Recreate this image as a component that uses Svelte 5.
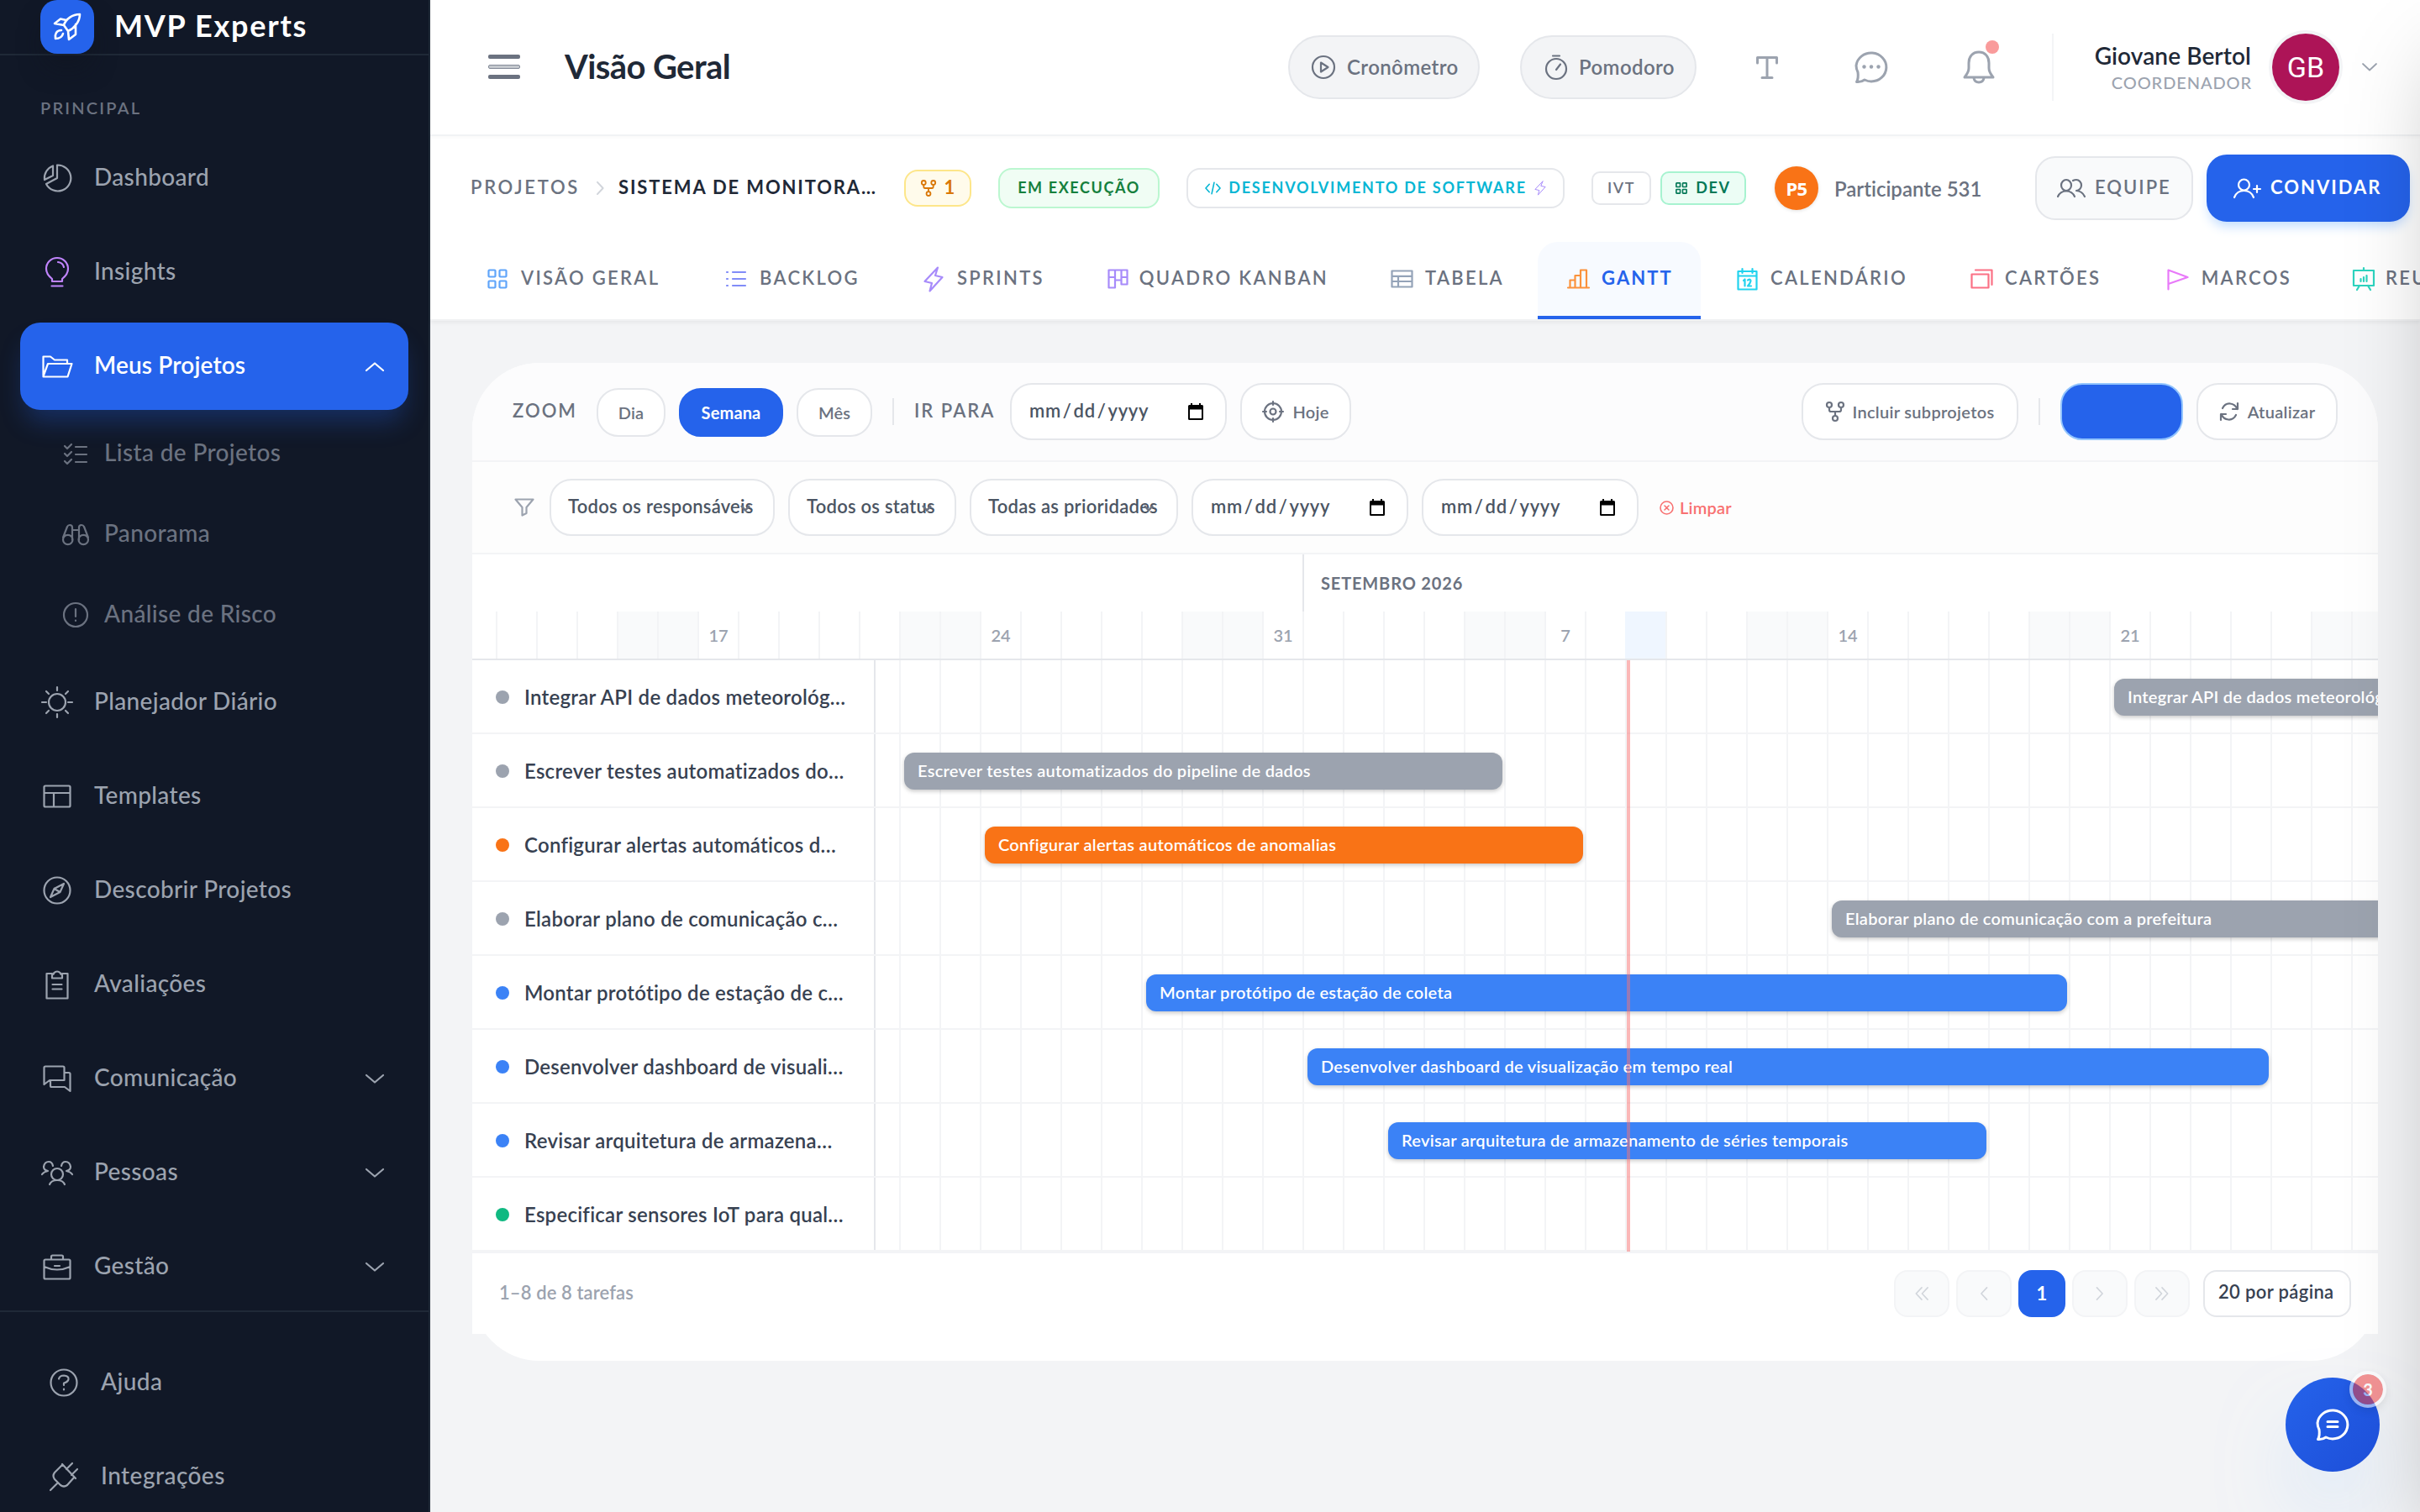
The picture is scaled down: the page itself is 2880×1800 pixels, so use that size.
<script>
  const icons = {
    rocket: [32, 32, 'M12 14C14 7 22 1 31 1C31 10 24 18 17 21ZM15 8L8 6.500L1 12L12 14M26 13V25L18 31L17 21M9 20C3 20 1 25 2 30C7 30 10 28 11 24'],
    pie: [34, 34, 'M17 1.500V17L4 24A15.500 15.500 0 1 0 17 1.500ZM12 2.500V14L2 19A15.500 15.500 0 0 1 12 2.500Z'],
    bulb: [28, 36, 'M8 29H20V26C25 22 27 18 27 14A13 13 0 0 0 1 14C1 18 3 22 8 26ZM7.500 34.500H20.500M15 6A8 8 0 0 1 22 12'],
    folder: [37, 27, 'M1.500 24V1.500H10L15 5.500H30V9.500M1.500 25L7 10H35.500L30.500 25.500H1.500Z'],
    checklist: [28, 25, 'M1 3L4 6L9 1M1 12L4 15L9 10M1 21L4 24L9 19M14 4H27M14 13H27M14 22H27'],
    binoculars: [32, 25, 'M12 19V4Q12 1 9 1Q7 1 6 3L1 16M20 19V4Q20 1 23 1Q25 1 26 3L31 16M12 7H20M12.500 18.500A5.700 5.500 0 1 1 1 18.500A5.700 5.500 0 1 1 12.500 18.500M31 18.500A5.700 5.500 0 1 1 19.500 18.500A5.700 5.500 0 1 1 31 18.500'],
    alert: [30, 30, 'M29 15A14 14 0 1 1 1 15A14 14 0 1 1 29 15M15 8V17M15 21.500V22'],
    sun: [38, 38, 'M29 19A10 10 0 1 1 9 19A10 10 0 1 1 29 19M19 1V5M19 33V37M1 19H6M32 19H37M6 6L9 9M29 29L32 32M6 32L9 29M29 9L32 6'],
    layout: [34, 28, 'M3 1.500H31Q32.500 1.500 32.500 3V25Q32.500 26.500 31 26.500H3Q1.500 26.500 1.500 25V3Q1.500 1.500 3 1.500ZM1.500 10H32.500M13 10V26.500'],
    compass: [34, 34, 'M32.500 17A15.500 15.500 0 1 1 1.500 17A15.500 15.500 0 1 1 32.500 17M25 9L20.500 19L9 25L13.500 15ZM13.500 15L20.500 19'],
    clipboard: [28, 35, 'M8 4H1.500V33.500H26.500V4H20M8 9.500H20V5Q18 5 18 3.500Q16 1.500 14 1.500Q12 1.500 10 3.500Q10 5 8 5ZM8.500 17H19.500M8.500 22.500H19.500'],
    chats: [34, 33, 'M1.500 23V3Q1.500 1.500 3 1.500H24Q25.500 1.500 25.500 3V18H8ZM25.500 9H31Q32.500 9 32.500 10.500V31L26 26H10.500Q9 26 9 24.500V18'],
    people: [38, 29, 'M26 16A7 7 0 1 1 12 16A7 7 0 1 1 26 16M10 28Q12 23 19 23Q26 23 28 28M1 16Q3 13 8 12Q3 11 3 7Q4 1 9 1Q13 1 14 6M37 16Q35 13 30 12Q35 11 35 7Q34 1 29 1Q25 1 24 6'],
    briefcase: [34, 31, 'M3 6.500H31Q32.500 6.500 32.500 8V28Q32.500 29.500 31 29.500H3Q1.500 29.500 1.500 28V8Q1.500 6.500 3 6.500ZM10 6.500V3Q10 1.500 11.500 1.500H22.500Q24 1.500 24 3V6.500M1.500 15Q17 22 32.500 15M14 14H20'],
    help: [34, 34, 'M32.500 17A15.500 15.500 0 1 1 1.500 17A15.500 15.500 0 1 1 32.500 17M11 12.500Q12 8.500 17 8.500Q23 9 22.500 13Q22 16 17 17.500V20M17 24.500V25.500'],
    plug: [34, 34, 'M1 33L9 25M15 2L31 19M27 1L20 8M33 8L26 15M15 3L6 12Q3 16 6 20L13 27Q17 30 21 27L29 18'],
    up: [22, 11, 'M1 10L11 1.500L21 10'],
    down: [22, 11, 'M1 1L11 9.500L21 1'],
    play: [28, 28, 'M27 14A13 13 0 1 1 1 14A13 13 0 1 1 27 14M11 8.500L19.500 14L11 19.500Z'],
    timer: [26, 30, 'M25 17A12 12 0 1 1 1 17A12 12 0 1 1 25 17M9 1.500H17M13 18L18 11.500'],
    text: [26, 27, 'M1.500 8V1.500H24.500V8M13 1.500V25.500M7 25.500H19'],
    chat: [40, 40, 'M4 26Q2 22 2 18A18 17 0 1 1 20 37Q16 37 12 35Q8 38 2.500 37.500Q5 33 4 26Z'],
    bell: [38, 40, 'M19 2C11 2 7 8 7 15V21C7 26 5 28 2 32H36C33 28 31 26 31 21V15C31 8 27 2 19 2ZM13 33Q14 38 19 38Q24 38 25 33'],
    chevron: [18, 10, 'M1 1L9 8.500L17 1'],
    right: [10, 18, 'M1 1L8.500 9L1 17'],
    left: [10, 18, 'M9 1L1.500 9L9 17'],
    first: [18, 18, 'M9 1L1.500 9L9 17M17 1L9.500 9L17 17'],
    last: [18, 18, 'M1 1L8.500 9L1 17M9 1L16.500 9L9 17'],
    fork: [22, 24, 'M7 4A3 3 0 1 1 1 4A3 3 0 1 1 7 4M21 4A3 3 0 1 1 15 4A3 3 0 1 1 21 4M14 20A3 3 0 1 1 8 20A3 3 0 1 1 14 20M4 7V10Q4 12 6 12H16Q18 12 18 10V7M11 12V17'],
    code: [20, 16, 'M5.500 3L1 8L5.500 13M14.500 3L19 8L14.500 13M11.500 1L8.500 15'],
    bolt: [24, 31, 'M17 1.500L1.500 18L10 20L7.500 29.500L22.500 13L14 11Z'],
    grid: [24, 24, 'M2.500 1.500H8.500Q9.500 1.500 9.500 2.500V8.500Q9.500 9.500 8.500 9.500H2.500Q1.500 9.500 1.500 8.500V2.500Q1.500 1.500 2.500 1.500ZM15.500 1.500H21.500Q22.500 1.500 22.500 2.500V8.500Q22.500 9.500 21.500 9.500H15.500Q14.500 9.500 14.500 8.500V2.500Q14.500 1.500 15.500 1.500ZM2.500 14.500H8.500Q9.500 14.500 9.500 15.500V21.500Q9.500 22.500 8.500 22.500H2.500Q1.500 22.500 1.500 21.500V15.500Q1.500 14.500 2.500 14.500ZM15.500 14.500H21.500Q22.500 14.500 22.500 15.500V21.500Q22.500 22.500 21.500 22.500H15.500Q14.500 22.500 14.500 21.500V15.500Q14.500 14.500 15.500 14.500Z'],
    list: [24, 20, 'M1 2H2M1 10H2M1 18H2M8 2H23M8 10H23M8 18H23'],
    kanban: [25, 24, 'M1.500 1.500H23.500V18.500H16.500V13.500H9V22.500H1.500ZM9 1.500V13.500M16.500 1.500V13.500M1.500 10H9M16.500 10H23.500'],
    table: [27, 22, 'M1.500 1.500H25.500V20.500H1.500ZM1.500 7.800H25.500M1.500 14H25.500M9 7.800V20.500'],
    gantt: [27, 24, 'M1 22.500H26M3.500 22.500V13.500H9.500V22.500M9.500 13.500V8H16V22.500M16 8V1.500H23V22.500'],
    calendar: [25, 27, 'M1.500 4H23.500V25.500H1.500ZM1.500 9.500H23.500M6.500 1V6M18.500 1V6M8 15L9.500 13.500V21.500M13 14.500Q16.500 12.500 16.500 15.500Q16 18 13 21.500H17'],
    cards: [27, 24, 'M1.500 6.500H21.500V22.500H1.500ZM6 1.500H25.500V19'],
    flag: [26, 25, 'M1.500 24.500V1.500L24.500 10L1.500 18'],
    board: [28, 28, 'M2 4H26V22H2ZM14 4V1M9 22L6 27M19 22L22 27M10.500 14V17M14 12V17M17.500 10V17'],
    team: [34, 22, 'M17 7.500A6 6.500 0 1 1 5 7.500A6 6.500 0 1 1 17 7.500M1 21Q4 14.500 11 14.500Q18 14.500 21 21M19 2Q21 1 23 1A6 6.500 0 0 1 23 14Q30 14.500 33 21'],
    invite: [33, 24, 'M19 8A6.500 6.500 0 1 1 6 8A6.500 6.500 0 1 1 19 8M1 23Q4 15 12.500 15Q21 15 24 23M28 9V17M24 13H32'],
    target: [26, 26, 'M23 13A10 10 0 1 1 3 13A10 10 0 1 1 23 13M16.500 13A3.500 3.500 0 1 1 9.500 13A3.500 3.500 0 1 1 16.500 13M13 1V5M13 21V25M1 13H5M21 13H25'],
    refresh: [24, 22, 'M4 7Q7 1 13 1.500Q19 2 21.500 8M22 1V8H16M20 15Q17 21 11 20.500Q5 20 2.500 14M2 21V14H8'],
    funnel: [24, 22, 'M1.500 1.500H22.500L14.500 11V18L9.500 20.500V11Z'],
    clear: [17, 17, 'M16 8.500A7.500 7.500 0 1 1 1 8.500A7.500 7.500 0 1 1 16 8.500M6 6L11 11M11 6L6 11'],
    support: [40, 40, 'M4 26Q2 22 2 18A18 17 0 1 1 20 37Q16 37 12 35Q8 38 2.500 37.500Q5 33 4 26ZM14 16.500H26M14 22.500H26']
  };

  const mainNav = [
    ['pie', 'Dashboard'],
    ['bulb', 'Insights', 'purple'],
    ['folder', 'Meus Projetos', 'active', 'up']
  ];
  const subNav = [['checklist', 'Lista de Projetos'], ['binoculars', 'Panorama'], ['alert', 'Análise de Risco']];
  const moreNav = [
    ['sun', 'Planejador Diário'],
    ['layout', 'Templates'],
    ['compass', 'Descobrir Projetos'],
    ['clipboard', 'Avaliações'],
    ['chats', 'Comunicação', '', 'down'],
    ['people', 'Pessoas', '', 'down'],
    ['briefcase', 'Gestão', '', 'down']
  ];
  const footNav = [['help', 'Ajuda'], ['plug', 'Integrações']];

  const tabs = [
    ['grid', 'VISÃO GERAL', 276, 'blue'],
    ['list', 'BACKLOG', 227, 'indigo'],
    ['bolt', 'SPRINTS', 214, 'violet'],
    ['kanban', 'QUADRO KANBAN', 328, 'violet'],
    ['table', 'TABELA', 201, 'slate'],
    ['gantt', 'GANTT', 194, 'orange'],
    ['calendar', 'CALENDÁRIO', 270, 'cyan'],
    ['cards', 'CARTÕES', 226, 'rose'],
    ['flag', 'MARCOS', 215, 'fuchsia'],
    ['board', 'REUNIÕES', 220, 'teal']
  ];

  // Day 0 is Tuesday, 11 August 2026.
  const days = Array.from({ length: 48 }, (_, i) => {
    const date = new Date(Date.UTC(2026, 7, 11 + i));
    const weekday = date.getUTCDay();
    return {
      label: weekday === 1 ? date.getUTCDate() : '',
      weekend: weekday === 0 || weekday === 6,
      today: i === 29
    };
  });
  const dayWidth = 48;

  const tasks = [
    { label: 'Integrar API de dados meteorológ…', name: 'Integrar API de dados meteorológicos', color: 'gray', start: 41, days: 14 },
    { label: 'Escrever testes automatizados do…', name: 'Escrever testes automatizados do pipeline de dados', color: 'gray', start: 11, days: 15 },
    { label: 'Configurar alertas automáticos d…', name: 'Configurar alertas automáticos de anomalias', color: 'orange', start: 13, days: 15 },
    { label: 'Elaborar plano de comunicação c…', name: 'Elaborar plano de comunicação com a prefeitura', color: 'gray', start: 34, days: 15 },
    { label: 'Montar protótipo de estação de c…', name: 'Montar protótipo de estação de coleta', color: 'blue', start: 17, days: 23 },
    { label: 'Desenvolver dashboard de visuali…', name: 'Desenvolver dashboard de visualização em tempo real', color: 'blue', start: 21, days: 24 },
    { label: 'Revisar arquitetura de armazena…', name: 'Revisar arquitetura de armazenamento de séries temporais', color: 'blue', start: 23, days: 15 },
    { label: 'Especificar sensores IoT para qual…', name: '', color: 'green', start: 0, days: 0 }
  ];
</script>

{#snippet icon(name, cls = '')}
  <svg class="icon {cls}" width={icons[name][0]} height={icons[name][1]} viewBox="0 0 {icons[name][0]} {icons[name][1]}">
    <path d={icons[name][2]} />
  </svg>
{/snippet}

{#snippet navItem([glyph, label, tone = '', arrow = ''])}
  <a class="nav-item {tone}">
    <span class="nav-icon">{@render icon(glyph)}</span>
    <span class="nav-label">{label}</span>
    {#if arrow}<span class="nav-arrow">{@render icon(arrow)}</span>{/if}
  </a>
{/snippet}

{#snippet caret()}
  <svg class="caret" width="12" height="8" viewBox="0 0 12 8"><path d="M1 1L6 6.500L11 1" /></svg>
{/snippet}

{#snippet dateField()}
  <div class="field date">
    <span>mm<i>/</i>dd<i>/</i>yyyy</span>
    <svg width="18" height="20" viewBox="0 0 18 20"><path fill="#000" d="M3 0h2v2h8V0h2v2h1.500Q18 2 18 3.500v15Q18 20 16.500 20h-15Q0 20 0 18.500v-15Q0 2 1.500 2H3ZM2 7.500v10.500h14V7.500Z" /></svg>
  </div>
{/snippet}

<div class="app">
  <aside class="sidebar">
    <div class="brand">
      <span class="logo">{@render icon('rocket')}</span>
      <span class="brand-name">MVP Experts</span>
    </div>
    <div class="section-title">PRINCIPAL</div>
    <nav class="nav">
      {#each mainNav as item}{@render navItem(item)}{/each}
      {#each subNav as [glyph, label]}
        <a class="sub-item"><span class="sub-icon">{@render icon(glyph)}</span><span class="nav-label">{label}</span></a>
      {/each}
      {#each moreNav as item}{@render navItem(item)}{/each}
    </nav>
    <nav class="nav foot">
      {#each footNav as item}{@render navItem(item)}{/each}
    </nav>
  </aside>

  <main class="main">
    <header class="topbar">
      <span class="burger"><b></b><b class="hollow"></b><b></b></span>
      <h1>Visão Geral</h1>
      <div class="top-actions">
        <button class="pill chrono">{@render icon('play')}<span>Cronômetro</span></button>
        <button class="pill pomo">{@render icon('timer')}<span>Pomodoro</span></button>
        <span class="top-icon t">{@render icon('text')}</span>
        <span class="top-icon c">
          <svg class="icon" width="40" height="40" viewBox="0 0 40 40"><path d={icons.chat[2]} /><g class="dots"><circle cx="11.500" cy="19.500" r="2.200" /><circle cx="20" cy="19.500" r="2.200" /><circle cx="28.500" cy="19.500" r="2.200" /></g></svg>
        </span>
        <span class="top-icon b">{@render icon('bell')}<em class="ping"></em></span>
        <div class="user">
          <div class="who"><strong>Giovane Bertol</strong><small>COORDENADOR</small></div>
          <span class="avatar">GB</span>
          {@render icon('chevron', 'user-chevron')}
        </div>
      </div>
    </header>

    <section class="project">
      <div class="crumbs">
        <span class="crumb">PROJETOS</span>
        {@render icon('right', 'crumb-sep')}
        <span class="crumb current">SISTEMA DE MONITORA…</span>
        <span class="badge sub-count">{@render icon('fork')}<span>1</span></span>
        <span class="badge status"><span>EM EXECUÇÃO</span></span>
        <span class="badge area">{@render icon('code')}<span>DESENVOLVIMENTO DE SOFTWARE</span>{@render icon('bolt', 'mini-bolt')}</span>
        <span class="badge ivt"><span>IVT</span></span>
        <span class="badge dev">{@render icon('grid')}<span>DEV</span></span>
        <span class="member">P5</span>
        <span class="member-name">Participante 531</span>
        <button class="team">{@render icon('team')}<span>EQUIPE</span></button>
        <button class="invite">{@render icon('invite')}<span>CONVIDAR</span></button>
      </div>
      <div class="tabs">
        {#each tabs as [glyph, label, width, tone]}
          <a class="tab" class:selected={label === 'GANTT'} style="width: {width}px">
            <span class="tab-icon {tone}">{@render icon(glyph)}</span><span class="tab-label">{label}</span>
          </a>
        {/each}
      </div>
    </section>

    <section class="content">
      <div class="card">
        <div class="toolbar">
          <span class="caption zoom">ZOOM</span>
          <button class="seg dia">Dia</button>
          <button class="seg semana on">Semana</button>
          <button class="seg mes">Mês</button>
          <span class="rule"></span>
          <span class="caption goto">IR PARA</span>
          {@render dateField()}
          <button class="btn hoje">{@render icon('target')}<span>Hoje</span></button>
          <div class="tool-right">
            <button class="btn incluir">{@render icon('fork')}<span>Incluir subprojetos</span></button>
            <span class="rule"></span>
            <button class="btn primary" aria-label="Nova tarefa"></button>
            <button class="btn atualizar">{@render icon('refresh')}<span>Atualizar</span></button>
          </div>
        </div>

        <div class="filters">
          {@render icon('funnel', 'funnel')}
          <div class="field select s1"><span>Todos os responsáveis</span>{@render caret()}</div>
          <div class="field select s2"><span>Todos os status</span>{@render caret()}</div>
          <div class="field select s3"><span>Todas as prioridades</span>{@render caret()}</div>
          {@render dateField()}
          {@render dateField()}
          <span class="clear">{@render icon('clear')}<span>Limpar</span></span>
        </div>

        <div class="months"><span class="month-prev"></span><span class="month">SETEMBRO 2026</span></div>
        <div class="days">
          {#each days as day}
            <span class="day" class:weekend={day.weekend} class:today={day.today}>{day.label}</span>
          {/each}
        </div>

        <div class="rows">
          {#each tasks as task}
            <div class="row">
              <div class="task"><i class="dot {task.color}"></i><span>{task.label}</span></div>
              <div class="lane">
                {#if task.name}
                  <div class="bar {task.color}" style="left: {task.start * dayWidth - 494}px; width: {task.days * dayWidth - 8}px"><span>{task.name}</span></div>
                {/if}
              </div>
            </div>
          {/each}
          <div class="now"></div>
        </div>

        <div class="pager">
          <span class="count">1–8 de 8 tarefas</span>
          <button class="page off">{@render icon('first')}</button>
          <button class="page off">{@render icon('left')}</button>
          <button class="page current">1</button>
          <button class="page off">{@render icon('right')}</button>
          <button class="page off">{@render icon('last')}</button>
          <div class="per-page">20 por página</div>
        </div>
      </div>
    </section>
  </main>

  <div class="drawer"></div>
  <div class="fab">{@render icon('support')}<span class="fab-badge">3</span></div>
</div>

<style>
  :global(body) { background: #f3f4f6; }
  * { box-sizing: border-box; }
  .app {
    position: relative; display: flex; width: 2880px; height: 1800px; overflow: hidden;
    font-family: Lato, "Open Sans", sans-serif; font-weight: 500; color: #374151; background: #f3f4f6;
    font-variant-ligatures: none;
  }
  button { font: inherit; font-variant-ligatures: none; color: inherit; padding: 0; margin: 0; border: 0; background: none; }
  span { white-space: nowrap; }
  .icon { flex: none; display: block; fill: none; stroke: currentColor; stroke-width: 2.2; stroke-linecap: round; stroke-linejoin: round; overflow: visible; }

  /* Sidebar */
  .sidebar { flex: none; width: 512px; height: 1800px; background: #111827; border-right: 2px solid #1f2937; overflow: hidden; }
  .brand { display: flex; align-items: center; height: 66px; padding-left: 48px; border-bottom: 2px solid #1f2937; }
  .logo { display: grid; place-items: center; width: 64px; height: 64px; border-radius: 20px; background: #2563eb; color: #fff; box-shadow: 0 20px 30px -6px rgba(15, 20, 30, .5); }
  .logo .icon { stroke-width: 2.6; }
  .brand-name { margin-left: 24px; color: #fff; font-size: 36px; font-weight: 700; letter-spacing: 1.75px; line-height: 44px; padding-bottom: 4px; }
  .section-title { height: 94px; padding: 50px 0 0 48px; font-size: 20px; line-height: 24px; font-weight: 600; letter-spacing: 2.2px; color: #6b7280; }
  .nav { display: flex; flex-direction: column; gap: 8px; }
  .nav-item { display: flex; align-items: center; height: 104px; margin: 0 24px; padding: 0 29px 0 20px; border-radius: 24px; color: #9ca3af; font-size: 28px; letter-spacing: .35px; }
  .nav-icon { width: 48px; display: grid; place-items: center; color: #9ca3af; }
  .nav-label { margin-left: 20px; padding-bottom: 4px; }
  .nav-arrow { margin-left: auto; }
  .purple .nav-icon { color: #c084fc; }
  .active { background: #2563eb; color: #fff; font-weight: 600; letter-spacing: .15px; box-shadow: 0 20px 30px -6px rgba(37, 99, 235, .3); }
  .active .nav-icon { color: #fff; }
  .sub-item { display: flex; align-items: center; height: 88px; padding-left: 66px; color: #6b7280; font-size: 28px; letter-spacing: .35px; }
  .sub-icon { width: 48px; display: grid; place-items: center; }
  .sub-item .nav-label { margin-left: 10px; padding-bottom: 5px; }
  .foot { border-top: 2px solid #1f2937; padding-top: 32px; }
  .foot .nav-item { padding-left: 28px; letter-spacing: .45px; }

  /* Top bar */
  .main { flex: 1; min-width: 0; display: flex; flex-direction: column; }
  .topbar { display: flex; align-items: center; flex: none; height: 162px; padding: 0 51px 0 69px; background: #fff; border-bottom: 2px solid #f3f4f6; }
  .burger { display: flex; flex-direction: column; gap: 7px; width: 38px; padding-bottom: 2px; }
  .burger b { height: 5px; border-radius: 2px; background: #6b7280; }
  .burger .hollow { background: #c4c8ce; border: 1px solid #858c99; }
  h1 { margin: 0 0 0 53px; font-size: 40px; line-height: 48px; font-weight: 700; letter-spacing: -.6px; color: #1f2937; padding-bottom: 3px; white-space: nowrap; }
  .top-actions { margin-left: auto; display: flex; align-items: center; }
  .pill { display: flex; align-items: center; gap: 14px; height: 76px; border-radius: 38px; border: 2px solid #e5e7eb; background: #f3f4f6; color: #6b7280; font-size: 24px; font-weight: 600; letter-spacing: .4px; padding-left: 26px; }
  .pill span { padding-bottom: 2px; }
  .chrono { width: 228px; }
  .pomo { width: 210px; margin-left: 48px; padding-left: 28px; }
  .top-icon { position: relative; display: grid; place-items: center; width: 40px; height: 40px; color: #9ca3af; }
  .top-icon .icon { stroke-width: 3; }
  .top-icon.t { margin-left: 64px; }
  .top-icon.c { margin-left: 84px; }
  .top-icon.b { margin-left: 88px; }
  .dots { fill: currentColor; stroke: none; }
  .ping { position: absolute; left: 28px; top: -12px; width: 16px; height: 16px; border-radius: 50%; background: #f99b9b; }
  .user { display: flex; align-items: center; height: 80px; margin-left: 67px; padding-left: 49px; border-left: 2px solid #f3f4f6; }
  .who { display: flex; flex-direction: column; align-items: flex-end; width: 186px; }
  .who strong { font-size: 28px; line-height: 32px; font-weight: 600; letter-spacing: .1px; color: #1f2937; white-space: nowrap; }
  .who small { margin-top: 3px; font-size: 20px; line-height: 26px; letter-spacing: .9px; color: #9ca3af; margin-right: -1px; }
  .avatar { display: grid; place-items: center; width: 80px; height: 80px; margin-left: 25px; border-radius: 50%; background: #ad1457; color: #fff; font: 400 34px Roboto, sans-serif; box-shadow: 0 0 0 4px #f3f4f6; }
  .user :global(.user-chevron) { margin-left: 27px; color: #9ca3af; stroke-width: 1.8; }

  /* Project header */
  .project { flex: none; height: 220px; background: #fff; border-bottom: 2px solid #f0f1f3; box-shadow: inset 0 3px 4px -2px rgba(0, 0, 0, .03), 0 2px 5px rgba(0, 0, 0, .06); }
  .crumbs { display: flex; align-items: center; height: 124px; padding-left: 48px; }
  .crumb { width: 150px; font-size: 22px; font-weight: 600; letter-spacing: 2.7px; color: #6b7280; padding-bottom: 3px; }
  .crumbs :global(.crumb-sep) { color: #d1d5db; width: 9px; height: 16px; }
  .crumb.current { width: 340px; margin-left: 17px; font-weight: 700; color: #1f2937; letter-spacing: 1.85px; }
  .badge { flex: none; display: flex; align-items: center; justify-content: center; height: 48px; border: 2px solid #e5e7eb; border-radius: 16px; font-size: 18px; font-weight: 700; letter-spacing: 1.6px; line-height: 24px; }
  .badge span { padding-bottom: 2px; }
  .sub-count { width: 80px; height: 44px; gap: 10px; color: #d97706; background: #fffbeb; border-color: #fde68a; font-size: 22px; letter-spacing: 0; }
  .sub-count .icon { width: 18px; height: 20px; }
  .status { width: 192px; margin-left: 32px; background: #f0fdf4; border-color: #bbf7d0; color: #15803d; }
  .area { width: 450px; margin-left: 32px; color: #06b6d4; gap: 9px; letter-spacing: 1.75px; }
  .area .icon { width: 19px; stroke-width: 1.7; }
  .area :global(.mini-bolt) { width: 14px; height: 18px; color: #a78bfa; }
  .ivt { width: 71px; height: 40px; margin-left: 32px; border-radius: 10px; color: #6b7280; font-weight: 600; }
  .dev { width: 102px; height: 40px; margin-left: 11px; border-radius: 10px; gap: 10px; background: #ecfdf5; border-color: #a7f3d0; color: #047857; }
  .dev .icon { width: 14px; height: 14px; stroke-width: 2.8; }
  .member { flex: none; display: grid; place-items: center; width: 52px; height: 52px; margin-left: 34px; border-radius: 50%; background: #f97316; color: #fff; font: 700 22px "Noto Sans", sans-serif; letter-spacing: -.5px; box-shadow: 0 1px 4px rgba(0, 0, 0, .12); }
  .member-name { width: 238px; padding-left: 19px; font-size: 24px; font-weight: 600; color: #6b7280; }
  .team, .invite { flex: none; display: flex; align-items: center; border-radius: 24px; font-size: 22px; font-weight: 600; letter-spacing: 2px; gap: 11px; }
  .team { width: 188px; height: 76px; margin-left: 20px; padding-left: 24px; background: #f9fafb; border: 2px solid #e5e7eb; color: #6b7280; }
  .invite { width: 242px; height: 80px; margin-left: 16px; padding-left: 32px; background: #2563eb; color: #fff; font-weight: 700; box-shadow: 0 8px 14px -3px #bfdbfe; }
  .team span, .invite span { padding-bottom: 3px; }
  .tabs { display: flex; gap: 8px; margin-top: 2px; padding-left: 32px; overflow: hidden; }
  .tab { flex: none; display: flex; align-items: center; height: 92px; padding: 0 32px; border-bottom: 4px solid transparent; font-size: 22px; font-weight: 600; letter-spacing: 2.3px; color: #6b7280; }
  .tab.selected { background: #f7faff; color: #2563eb; border-bottom-color: #2563eb; font-weight: 700; letter-spacing: 2.1px; clip-path: inset(0 round 24px 24px 0 0); }
  .tab-icon { display: grid; place-items: center; width: 32px; margin-right: 12px; }
  .tab-label { padding-bottom: 3px; }
  .blue { color: #60a5fa; } .indigo { color: #818cf8; } .violet { color: #a78bfa; } .slate { color: #94a3b8; }
  .orange { color: #fb923c; } .cyan { color: #22d3ee; } .rose { color: #fb7185; } .fuchsia { color: #e879f9; } .teal { color: #2dd4bf; }

  /* Gantt card */
  .content { padding: 50px; }
  .card { height: 1188px; border-radius: 80px; background: #fff; }
  .toolbar { display: flex; align-items: center; height: 118px; padding: 0 48px; background: #fcfcfd; border-bottom: 2px solid #f3f4f6; border-radius: 80px 80px 0 0; }
  .caption { font-size: 22px; font-weight: 600; letter-spacing: 2px; color: #6b7280; padding-bottom: 3px; }
  .zoom { width: 100px; }
  .goto { width: 114px; }
  .seg { height: 58px; margin-top: 2px; border: 2px solid #e5e7eb; border-radius: 26px; background: #fff; font-size: 20px; font-weight: 600; letter-spacing: .15px; color: #6b7280; }
  .dia { width: 82px; }
  .semana { width: 124px; margin: 2px 16px 0; }
  .mes { width: 90px; }
  .seg.on { background: #2563eb; border-color: #2563eb; color: #fff; font-weight: 700; }
  .rule { width: 2px; height: 32px; margin: 0 24px; background: #e5e7eb; }
  .field { position: relative; flex: none; display: flex; align-items: center; height: 68px; border: 2px solid #e5e7eb; border-radius: 26px; background: #fff; color: #4b5563; font-size: 22px; font-weight: 600; letter-spacing: .25px; padding: 0 26px 0 21px; }
  .field span { padding-bottom: 3px; }
  .field i { font-style: normal; padding: 0 2px; }
  .date { width: 258px; justify-content: space-between; letter-spacing: .65px; }
  .btn { display: flex; align-items: center; justify-content: center; gap: 10px; height: 68px; border: 2px solid #e5e7eb; border-radius: 26px; background: #fff; color: #6b7280; font-size: 20px; font-weight: 600; letter-spacing: .3px; }
  .hoje { width: 132px; margin-left: 16px; }
  .tool-right { display: flex; align-items: center; margin-left: auto; }
  .incluir { width: 258px; }
  .primary { width: 146px; background: #2563eb; border-color: #93c5fd; }
  .atualizar { width: 168px; margin-left: 16px; }
  .filters { display: flex; align-items: center; gap: 16px; height: 110px; padding: 0 48px 0 50px; background: #fdfdfd; border-bottom: 2px solid #f3f4f6; }
  .filters :global(.funnel) { color: #9ca3af; margin-right: 2px; }
  .select { padding: 0 20px; }
  .s1 { width: 268px; } .s2 { width: 200px; } .s3 { width: 248px; }
  .caret { position: absolute; right: 27px; top: 29px; fill: none; stroke: #6b7280; stroke-width: 2.6; }
  .clear { display: flex; align-items: center; gap: 7px; margin-left: 9px; color: #f87171; font-size: 20px; font-weight: 600; letter-spacing: .2px; }
  .clear .icon { stroke-width: 1.6; }
  .months { display: flex; height: 68px; }
  .month-prev { flex: none; width: 988px; }
  .month { border-left: 2px solid #e5e7eb; padding: 22px 0 0 20px; font-size: 20px; line-height: 24px; font-weight: 700; letter-spacing: .85px; color: #6b7280; }
  .days { display: flex; height: 58px; border-bottom: 2px solid #e5e7eb; overflow: hidden; }
  .day { flex: none; display: grid; place-items: center; width: 48px; border-left: 2px solid #f3f4f6; font-size: 20px; font-weight: 600; color: #9ca3af; }
  .day:first-child { margin-left: -20px; }
  .weekend { background: #f9fafb; }
  .today { background: #eff6ff; border-left-color: #eff6ff; }
  .rows { position: relative; overflow: hidden; }
  .row { display: flex; height: 88px; border-bottom: 2px solid #f3f4f6; }
  .task { flex: none; display: flex; align-items: center; width: 480px; padding: 2px 0 0 28px; border-right: 2px solid #e5e7eb; font-size: 24px; font-weight: 600; letter-spacing: .25px; color: #374151; }
  .task span { padding-bottom: 2px; }
  .dot { width: 16px; height: 16px; margin-right: 18px; border-radius: 50%; }
  .dot.gray, .bar.gray { background: #9ca3af; }
  .dot.orange, .bar.orange { background: #f97316; }
  .dot.blue, .bar.blue { background: #3b82f6; }
  .dot.green { background: #10b981; }
  .lane { position: relative; flex: 1; min-width: 0; background: repeating-linear-gradient(90deg, transparent 0 28px, #f3f4f6 28px 30px, transparent 30px 48px); }
  .bar { position: absolute; top: 22px; height: 44px; padding: 0 16px; border-radius: 12px; color: #fff; font-size: 20px; font-weight: 600; letter-spacing: .27px; display: flex; align-items: center; box-shadow: 0 2px 5px rgba(0, 0, 0, .22); }
  .bar span { padding-bottom: 3px; }
  .now { position: absolute; left: 1374px; top: 0; bottom: 0; width: 4px; background: #f87171; opacity: .5; }
  .pager { display: flex; align-items: center; gap: 8px; height: 98px; padding: 0 32px; border-top: 2px solid #f3f4f6; background: #fff; }
  .count { margin-right: auto; font-size: 22px; color: #9ca3af; font-weight: 600; letter-spacing: .1px; padding-bottom: 3px; }
  .page { display: grid; place-items: center; width: 66px; height: 56px; border-radius: 16px; }
  .off { background: #f9fafb; border: 2px solid #f3f4f6; color: #d1d5db; }
  .off .icon { height: 16px; stroke-width: 1.8; }
  .current.page { width: 56px; background: #2563eb; color: #fff; font-size: 22px; font-weight: 700; padding-bottom: 2px; }
  .per-page { width: 176px; height: 56px; margin-left: 8px; padding: 10px 0 0 16px; border: 2px solid #e5e7eb; border-radius: 16px; font-size: 22px; line-height: 27px; font-weight: 600; letter-spacing: .35px; color: #374151; white-space: nowrap; }

  /* Overlays */
  .drawer { position: absolute; left: 2880px; top: 0; width: 800px; height: 1800px; box-shadow: 0 50px 100px -24px rgba(0, 0, 0, .25); }
  .fab { position: absolute; left: 2720px; top: 1640px; display: grid; place-items: center; width: 112px; height: 112px; border-radius: 50%; background: linear-gradient(135deg, #2563eb, #1d4ed8); color: #fff; box-shadow: 0 50px 100px -24px rgba(147, 197, 253, .6); }
  .fab .icon { stroke-width: 3; }
  .fab-badge { position: absolute; right: -8px; top: -8px; display: grid; place-items: center; width: 44px; height: 44px; border: 4px solid #fff; border-radius: 50%; background: #ef4444; background-clip: padding-box; font-size: 20px; font-weight: 700; opacity: .55; box-shadow: 0 4px 8px rgba(0, 0, 0, .15); }
</style>
